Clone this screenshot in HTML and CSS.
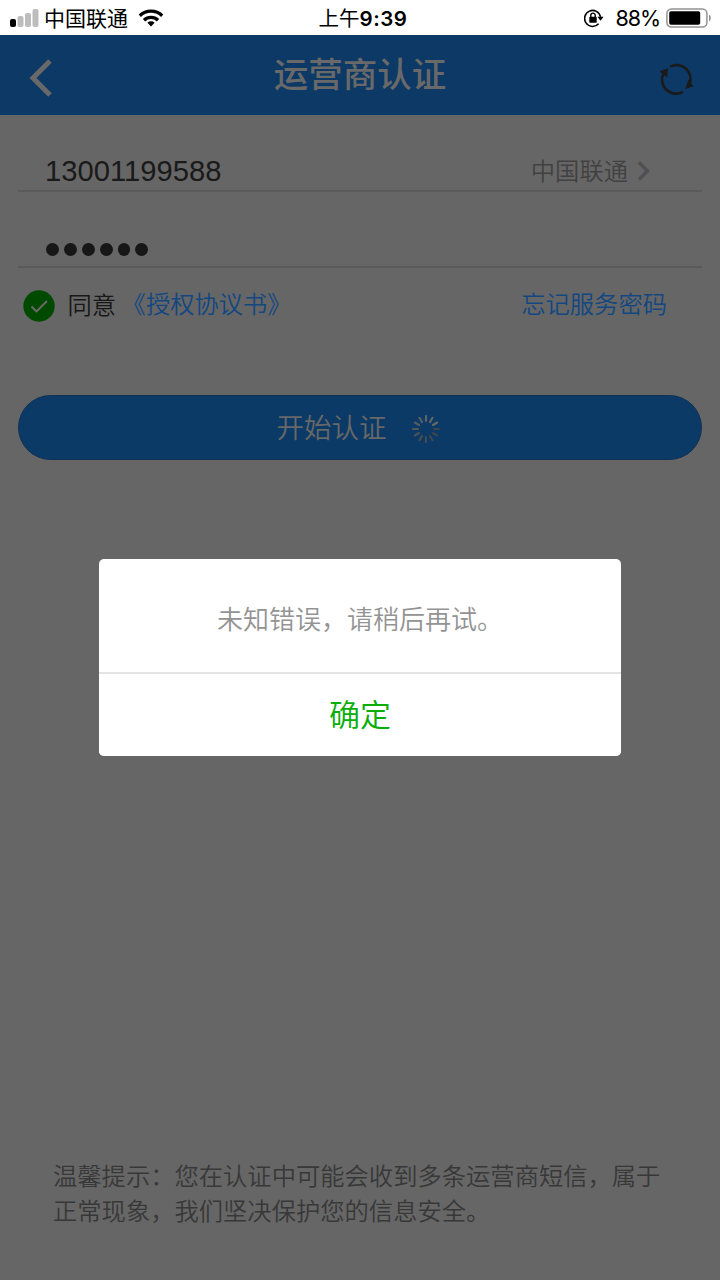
FILE: index.html
```html
<!DOCTYPE html>
<html lang="zh-CN">
<head>
<meta charset="utf-8">
<title>运营商认证</title>
<link rel="stylesheet" href="styles.css">
</head>
<body>
<div class="screen">
  <div class="status">
    <div class="status-left">
      <svg class="signal" width="29" height="18" viewBox="0 0 29 18"><rect x="0" y="10" width="6" height="8" rx="2" fill="#000"/><rect x="7.5" y="7" width="6" height="11" rx="2" fill="#bdbdbd"/><rect x="15" y="4" width="6" height="14" rx="2" fill="#bdbdbd"/><rect x="22.5" y="0" width="6" height="18" rx="2" fill="#bdbdbd"/></svg>
      <span class="carrier">中国联通</span>
      <svg class="wifi" width="26" height="18" viewBox="0 0 26 18" fill="none" stroke="#000" stroke-width="3.3"><path d="M1.8 6.7a16 16 0 0 1 22.4 0"/><path d="M6 11.2a10 10 0 0 1 14 0"/><path d="M13 17.4l-3.6-3.6a5.2 5.2 0 0 1 7.2 0z" fill="#000" stroke="none"/></svg>
    </div>
    <div class="clock">上午<b>9:39</b></div>
    <div class="status-right">
      <svg width="20" height="19" viewBox="0 0 20 19"><path d="M14.6 14.8a8 8 0 1 1 1.9-6.9" fill="none" stroke="#000" stroke-width="1.6"/><path d="M13.4 7.8h6.2l-3.1 4z"/><rect x="5.3" y="7.8" width="7.4" height="5.9" rx=".7"/><path d="M6.8 8.5V6.3a2.2 2.2 0 0 1 4.4 0v2.2" fill="none" stroke="#000" stroke-width="1.4"/></svg>
      <span class="percent">88%</span>
      <svg width="46" height="20" viewBox="0 0 46 20"><rect x=".9" y=".9" width="40" height="18.2" rx="4.5" fill="none" stroke="#929292" stroke-width="1.5"/><rect x="3.2" y="3.2" width="31" height="13.6" rx="1.8"/><path d="M43 6.5c2.4 1.4 2.4 5.6 0 7z" fill="#929292"/></svg>
    </div>
  </div>

  <header class="header">
    <svg class="back" width="24" height="38" viewBox="0 0 24 38"><path d="M21 2L4 19l17 17" fill="none" stroke="#696969" stroke-width="5"/></svg>
    <h1 class="title">运营商认证</h1>
    <svg class="refresh" width="36" height="34" viewBox="0 0 36 34"><g fill="none" stroke="#1a1a1a" stroke-width="2.7"><path d="M11.2 4.6A14 14 0 0 1 30.7 21.8"/><path d="M24 29.8A14 14 0 0 1 4.6 11.2"/></g><path d="M.5 9.3l8.6-3-.9 9.3zM34.5 24.2l-8.3 2.7 3.2-9.2z" fill="#1a1a1a"/></svg>
  </header>

  <main class="form">
    <div class="field">
      <span class="phone">13001199588</span>
      <span class="operator">中国联通</span>
      <svg class="chevron" width="14" height="20" viewBox="0 0 14 20"><path d="M2 1.5l8.5 8.5L2 18.5" fill="none" stroke="#505052" stroke-width="3.5"/></svg>
    </div>
    <div class="field field-password">
      <div class="dots"><i class="dot"></i><i class="dot"></i><i class="dot"></i><i class="dot"></i><i class="dot"></i><i class="dot"></i></div>
    </div>
    <div class="agreement">
      <svg class="check" width="32" height="32" viewBox="0 0 32 32"><circle cx="16" cy="16" r="15.7" fill="#004a00"/><path d="M8.5 16.5l5 5L24 11" fill="none" stroke="#6b6b6b" stroke-width="1.8"/></svg>
      <span class="agree">同意</span>
      <a class="link terms">《授权协议书》</a>
      <a class="link forgot">忘记服务密码</a>
    </div>
    <button class="submit">
      <span>开始认证</span>
      <svg class="spinner" width="28" height="28" viewBox="-14 -14 28 28" stroke-width="2.1" stroke-linecap="round"><path d="M0-8v-5" stroke="#5d6469"/><path d="M0-8v-5" stroke="#62666a" transform="rotate(30)"/><path d="M0-8v-5" stroke="#686868" transform="rotate(60)"/><path d="M0-8v-5" stroke="#3b434d" transform="rotate(90)"/><path d="M0-8v-5" stroke="#3e454e" transform="rotate(120)"/><path d="M0-8v-5" stroke="#414850" transform="rotate(150)"/><path d="M0-8v-5" stroke="#454b52" transform="rotate(180)"/><path d="M0-8v-5" stroke="#484e54" transform="rotate(210)"/><path d="M0-8v-5" stroke="#4b5156" transform="rotate(240)"/><path d="M0-8v-5" stroke="#50565b" transform="rotate(270)"/><path d="M0-8v-5" stroke="#555b60" transform="rotate(300)"/><path d="M0-8v-5" stroke="#596065" transform="rotate(330)"/></svg>
    </button>
  </main>

  <p class="tip">温馨提示：您在认证中可能会收到多条运营商短信，属于<br>正常现象，我们坚决保护您的信息安全。</p>

  <div class="overlay">
    <div class="dialog">
      <div class="message">未知错误，请稍后再试。</div>
      <button class="confirm">确定</button>
    </div>
  </div>
</div>
</body>
</html>
```
FILE: styles.css
```css
* { box-sizing: border-box; }
body { margin: 0; font-family: "Noto Sans CJK SC", sans-serif; }
button { font-family: inherit; }
svg { display: block; flex: none; }
.screen { position: relative; width: 720px; height: 1280px; background: #666; display: flex; flex-direction: column; overflow: hidden; white-space: nowrap; }
.status { height: 35px; flex: none; background: #fff; display: grid; grid-template-columns: 1fr auto 1fr; align-items: center; padding: 0 8px 0 10px; color: #000; }
.status-left, .status-right { display: flex; align-items: center; }
.status-right { justify-content: flex-end; }
.carrier { font-size: 21px; line-height: 33px; margin: 0 10px 1px 5px; }
.clock { font-size: 20.5px; line-height: 35px; padding-left: 4px; }
.clock b { font: 600 20.5px/35px Inter, sans-serif; letter-spacing: .5px; }
.percent { font: 400 21.5px/35px Inter, sans-serif; margin: 0 6px 0 12px; letter-spacing: -1.1px; }
.header { height: 80px; flex: none; background: #0d3966; display: grid; grid-template-columns: 80px 1fr 80px; align-items: center; color: #696969; }
.back { margin: 5px 0 0 29px; }
.title { margin: 0; font-size: 34.5px; line-height: 50px; font-weight: 500; text-align: center; padding-bottom: 7px; }
.refresh { margin: 8px 0 0 19px; }
.form { padding: 0 18px; display: flex; flex-direction: column; }
.field { height: 77px; border-bottom: 2px solid #5b5b5c; display: flex; align-items: flex-end; padding: 0 51px 0 27px; }
.phone { font: 29.2px/38px "Liberation Sans", sans-serif; color: #1a1a1a; margin-right: auto; }
.operator { font-size: 24.3px; line-height: 40px; font-weight: 350; color: #414141; }
.chevron { margin: 0 0 9px 9px; }
.field-password { height: 76px; }
.dots { display: flex; gap: 5px; padding: 0 0 10px 1px; }
.dot { width: 12.9px; height: 13px; border-radius: 50%; background: #171717; }
.agreement { height: 127px; padding: 17px 35px 0 5px; display: flex; align-items: flex-start; }
.check { margin-top: 5px; }
.agree { font-size: 24.3px; line-height: 36px; margin: 1px 0 0 12.5px; font-weight: 350; color: #171717; }
.link { font-size: 24.3px; line-height: 36px; font-weight: 350; color: #124781; }
.terms { margin-left: 5.5px; }
.forgot { margin-left: auto; }
.submit { height: 65px; border: 1px solid #103355; border-radius: 33px; background: #0b3a66; color: #686868; font-size: 27.5px; line-height: 60px; font-weight: 350; display: flex; align-items: center; justify-content: center; gap: 25px; padding: 0 4px 4px 0; }
.spinner { margin-top: 7px; }
.tip { margin: auto 0 53px; padding-left: 53px; font-size: 24.3px; line-height: 35px; font-weight: 350; color: #383838; }
.overlay { position: absolute; inset: 35px 0 0; display: flex; justify-content: center; align-items: flex-start; padding-top: 524px; }
.dialog { width: 522px; height: 197px; border-radius: 5px; background: #fff; display: flex; flex-direction: column; overflow: hidden; }
.message { height: 113px; flex: none; font-size: 26px; line-height: 117px; font-weight: 350; color: #939393; padding-left: 118px; }
.confirm { flex: 1; border: 0; border-top: 2px solid #e4e4e4; background: #fff; color: #09ae09; font-size: 31px; line-height: 40px; font-weight: 350; padding: 0 0 4px; }
```
